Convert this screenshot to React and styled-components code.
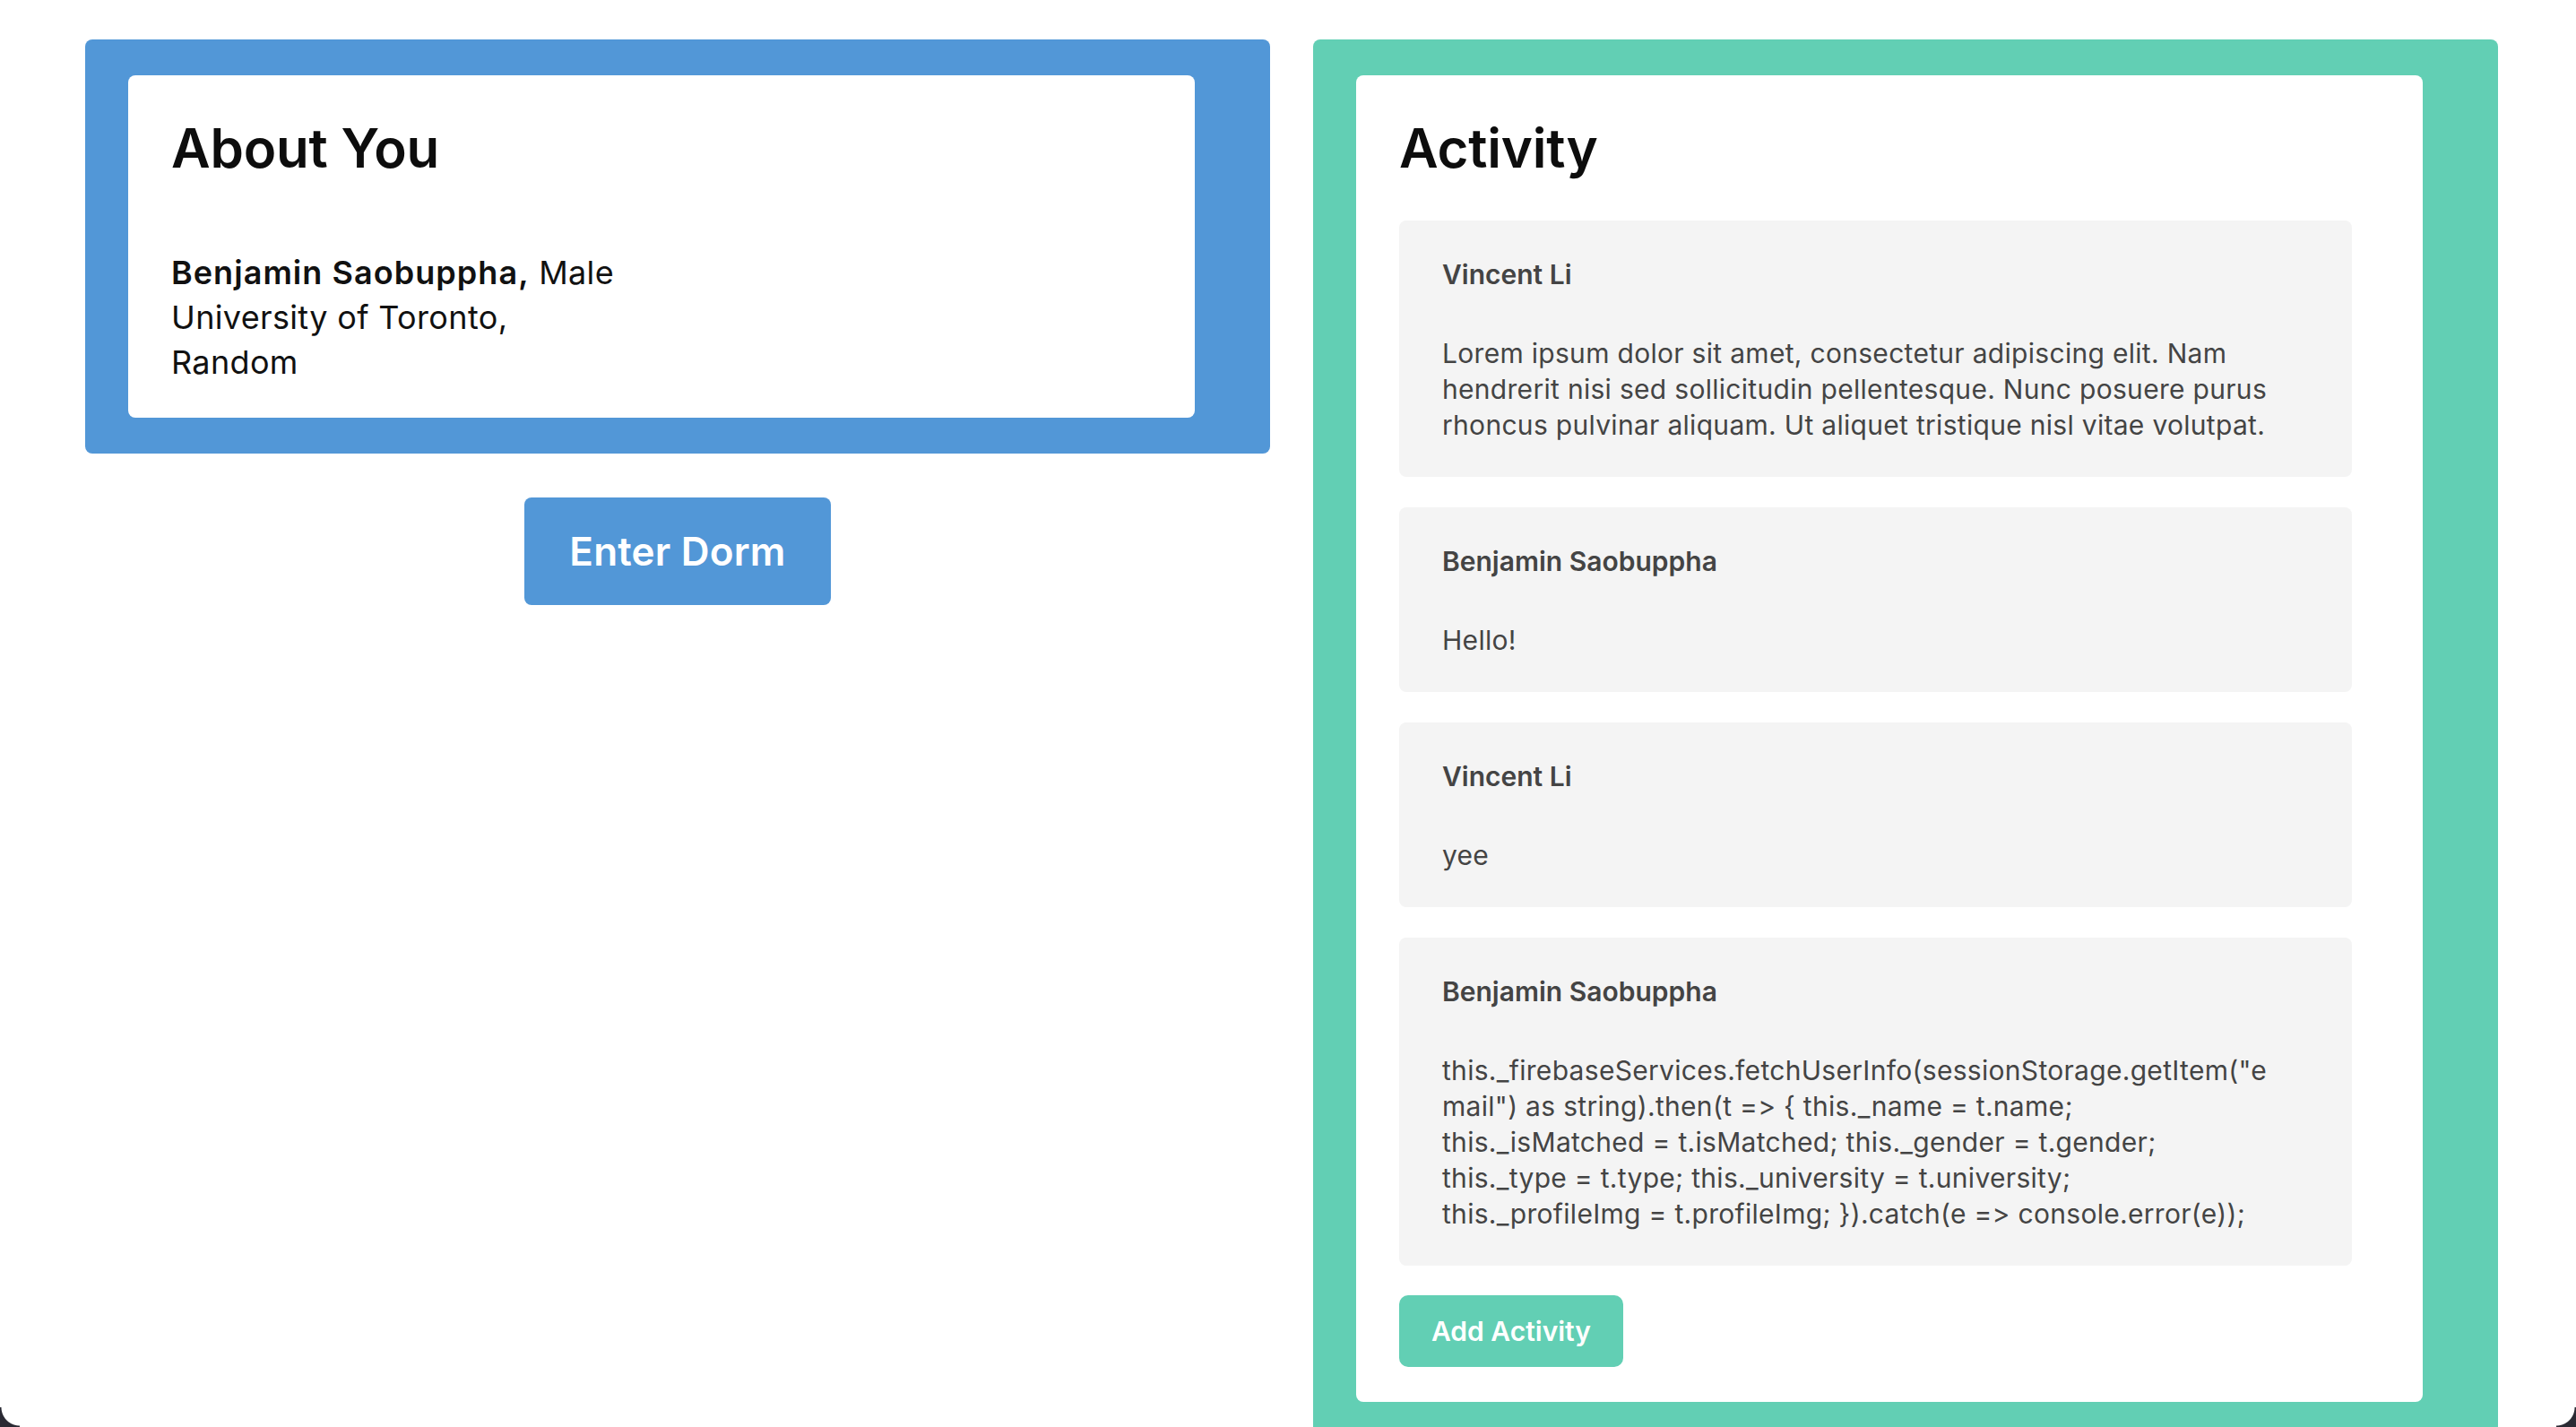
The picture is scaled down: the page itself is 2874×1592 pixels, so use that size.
import React from "react";
import styled, { createGlobalStyle } from "styled-components";

const GlobalStyle = createGlobalStyle`
  html, body {
    margin: 0;
    padding: 0;
    background: #ffffff;
    overflow: hidden;
  }
  body {
    font-family: Inter, "Noto Sans", "Liberation Sans", sans-serif;
    font-variant-ligatures: none;
    font-feature-settings: "calt" 0, "liga" 0;
    color: #111111;
  }
  * { box-sizing: border-box; }
`;

const Page = styled.main`
  display: flex;
  align-items: flex-start;
  gap: 48px;
  padding: 44px 0 0 95px;
  min-height: 1592px;
`;

const Column = styled.section`
  width: 1322px;
  display: flex;
  flex-direction: column;
  align-items: center;
`;

const Panel = styled.div`
  align-self: stretch;
  background: ${(p) => p.$color};
  border-radius: 8px;
  padding: 40px 0;
`;

const Card = styled.div`
  width: 90%;
  margin-left: 48px;
  background: #ffffff;
  border-radius: 8px;
  padding: 45px 48px ${(p) => p.$bottom || 37}px 48px;
`;

const Heading = styled.h1`
  margin: 0;
  font-size: 60px;
  line-height: 72px;
  font-weight: 600;
  color: #0d0d0d;
  letter-spacing: -0.2px;
`;

const Info = styled.p`
  margin: 78px 0 0;
  font-size: 36px;
  line-height: 50px;
  font-weight: 400;
  letter-spacing: 0.35px;
  color: #111111;
`;

const Strong = styled.strong`
  font-weight: 600;
  letter-spacing: 1.05px;
`;

const PrimaryButton = styled.button`
  margin-top: 49px;
  height: 120px;
  padding: 0 50px;
  border: none;
  border-radius: 8px;
  background: #5297d7;
  color: #ffffff;
  font-family: Inter, "Noto Sans", sans-serif;
  font-size: 44px;
  font-weight: 600;
  letter-spacing: 0.2px;
  cursor: pointer;
`;

const List = styled.div`
  margin-top: 45px;
  display: flex;
  flex-direction: column;
  gap: 34px;
`;

const Item = styled.article`
  width: 1063px;
  background: #f4f4f4;
  border-radius: 8px;
  padding: 40px 85px 38px 48px;
  color: #444444;
`;

const Author = styled.h4`
  margin: 0 0 48px;
  font-size: 30px;
  line-height: 40px;
  font-weight: 600;
`;

const Body = styled.p`
  margin: 0;
  font-size: 30px;
  line-height: 40px;
  font-weight: 400;
  letter-spacing: 0.3px;
  overflow-wrap: anywhere;
`;

const AddButton = styled.button`
  margin-top: 33px;
  height: 80px;
  padding: 0 36px;
  border: none;
  border-radius: 10px;
  background: #62cfb4;
  color: #ffffff;
  font-family: Inter, "Noto Sans", sans-serif;
  font-size: 30px;
  font-weight: 600;
  cursor: pointer;
`;

const Corner = styled.div`
  position: fixed;
  bottom: 0;
  ${(p) => (p.$side === "left" ? "left: 0;" : "right: 0;")}
  width: 22px;
  height: 22px;
  background: radial-gradient(
    circle at ${(p) => (p.$side === "left" ? "100% 0%" : "0% 0%")},
    transparent 20px,
    #2a2a33 21px
  );
  pointer-events: none;
`;

const activities = [
  {
    author: "Vincent Li",
    text: "Lorem ipsum dolor sit amet, consectetur adipiscing elit. Nam hendrerit nisi sed sollicitudin pellentesque. Nunc posuere purus rhoncus pulvinar aliquam. Ut aliquet tristique nisl vitae volutpat.",
  },
  { author: "Benjamin Saobuppha", text: "Hello!" },
  { author: "Vincent Li", text: "yee" },
  {
    author: "Benjamin Saobuppha",
    text: 'this._firebaseServices.fetchUserInfo(sessionStorage.getItem("email") as string).then(t => { this._name = t.name; this._isMatched = t.isMatched; this._gender = t.gender; this._type = t.type; this._university = t.university; this._profileImg = t.profileImg; }).catch(e => console.error(e));',
  },
];

export default function App() {
  return (
    <>
      <GlobalStyle />
      <Page>
        <Column>
          <Panel $color="#5297d7">
            <Card>
              <Heading>About You</Heading>
              <Info>
                <Strong>Benjamin Saobuppha,</Strong> Male
                <br />
                University of Toronto,
                <br />
                Random
              </Info>
            </Card>
          </Panel>
          <PrimaryButton>Enter Dorm</PrimaryButton>
        </Column>
        <Column>
          <Panel $color="#62cfb4">
            <Card $bottom={39}>
              <Heading>Activity</Heading>
              <List>
                {activities.map((a, i) => (
                  <Item key={i}>
                    <Author>{a.author}</Author>
                    <Body>{a.text}</Body>
                  </Item>
                ))}
              </List>
              <AddButton>Add Activity</AddButton>
            </Card>
          </Panel>
        </Column>
      </Page>
      <Corner $side="left" />
      <Corner $side="right" />
    </>
  );
}
